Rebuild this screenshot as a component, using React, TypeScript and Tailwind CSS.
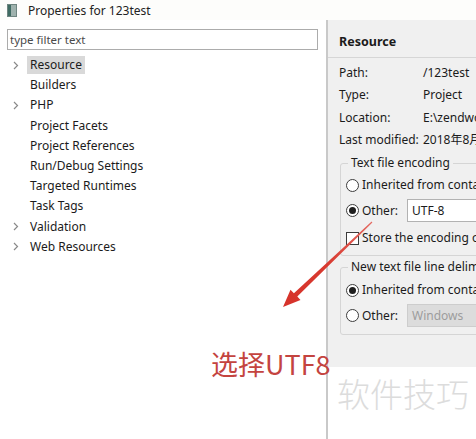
import React from "react";

const treeItems = [
  { name: "Resource", arrow: true, selected: true },
  { name: "Builders", arrow: false },
  { name: "PHP", arrow: true },
  { name: "Project Facets", arrow: false },
  { name: "Project References", arrow: false },
  { name: "Run/Debug Settings", arrow: false },
  { name: "Targeted Runtimes", arrow: false },
  { name: "Task Tags", arrow: false },
  { name: "Validation", arrow: true },
  { name: "Web Resources", arrow: true },
];

const info = [
  ["Path:", "/123test"],
  ["Type:", "Project"],
  ["Location:", "E:\\zendworkspace\\123test"],
  ["Last modified:", "2018年8月10日 下午3:12:45"],
];

function Radio({ checked }: { checked?: boolean }) {
  return (
    <span className="w-[13px] h-[13px] rounded-full border border-[#3c3c3c] bg-white flex items-center justify-center shrink-0">
      {checked && <span className="w-[7px] h-[7px] rounded-full bg-[#1e1e1e]" />}
    </span>
  );
}

function Chevron() {
  return (
    <svg width="6" height="9" viewBox="0 0 6 9" className="shrink-0">
      <path d="M1 1l3.5 3.5L1 8" fill="none" stroke="#8a8a8a" strokeWidth="1.2" />
    </svg>
  );
}

export default function App() {
  return (
    <div
      className="relative w-[476px] h-[439px] bg-white overflow-hidden text-[#1b1b1b] text-[12px]"
      style={{ fontFamily: '"Noto Sans", "Noto Sans CJK SC", sans-serif' }}
    >
      {/* Title bar */}
      <div className="h-[20px] flex items-center pl-[7px] gap-[11px] bg-[#fdfdfb]">
        <div className="w-[10px] h-[13px] bg-[#9fb2ad] border border-[#6f8580] flex">
          <div className="w-[3px] bg-[#3f6b62]" />
        </div>
        <span className="text-[12px] text-[#222] pt-[2px]">Properties for 123test</span>
      </div>

      <div className="flex h-[419px]">
        {/* Left: filter + tree */}
        <div className="w-[326px] shrink-0 pt-[9px]">
          <div className="ml-[7px] w-[311px] h-[21px] border border-[#acacac] flex items-center pl-[2px] text-[#4a4a4a] text-[11.5px]">
            type filter text
          </div>
          <div className="pt-[5px]">
            {treeItems.map((t) => (
              <div key={t.name} className="h-[20.2px] flex items-center">
                <div className="w-[27px] flex justify-end pr-[8px]">{t.arrow && <Chevron />}</div>
                <span
                  className={`px-[3px] leading-[18px] text-[12px] ${t.selected ? "bg-[#d9d9d9]" : ""}`}
                >
                  {t.name}
                </span>
              </div>
            ))}
          </div>
        </div>

        {/* Right: resource page */}
        <div className="flex-1 border-l-2 border-[#c9c9c9] overflow-hidden flex flex-col">
          <div className="bg-[#f0f0f0] h-[347px] w-[300px]">
            <div className="h-[38px] flex items-center pl-[11px] pt-[7px] font-bold text-[12.5px] border-b border-[#d6d6d6]">
              Resource
            </div>
            <div className="pl-[11px] pt-[4px]">
              {info.map(([k, v]) => (
                <div key={k} className="h-[22.3px] flex items-center whitespace-nowrap">
                  <span className="w-[84px] shrink-0">{k}</span>
                  <span>{v}</span>
                </div>
              ))}
            </div>

            <fieldset className="ml-[12px] mt-[4px] w-[270px] border border-[#d5d5d5] rounded-[3px] pl-[5px] pb-[4px]">
              <legend className="px-[3px] ml-[2px] leading-[16px] whitespace-nowrap">Text file encoding</legend>
              <div className="h-[22px] mt-[3px] flex items-center gap-[3px] whitespace-nowrap">
                <Radio />
                <span>Inherited from container (UTF-8)</span>
              </div>
              <div className="h-[29px] flex items-center gap-[3px] whitespace-nowrap">
                <Radio checked />
                <span className="w-[42px]">Other:</span>
                <div className="h-[23px] w-[180px] bg-white border border-[#b2b2b2] flex items-center pl-[4px]">UTF-8</div>
              </div>
              <div className="h-[26px] flex items-center gap-[2px] whitespace-nowrap">
                <span className="w-[13px] h-[13px] border border-[#3c3c3c] bg-white shrink-0" />
                <span className="ml-[1px]">Store the encoding of derived resources separately</span>
              </div>
            </fieldset>

            <fieldset className="ml-[12px] mt-[3px] w-[270px] border border-[#d5d5d5] rounded-[3px] pl-[5px] pb-[4px]">
              <legend className="px-[3px] ml-[2px] leading-[16px] whitespace-nowrap">New text file line delimiter</legend>
              <div className="h-[22px] mt-[4px] flex items-center gap-[3px] whitespace-nowrap">
                <Radio checked />
                <span>Inherited from container (Windows)</span>
              </div>
              <div className="h-[29px] flex items-center gap-[3px] whitespace-nowrap">
                <Radio />
                <span className="w-[42px]">Other:</span>
                <div className="h-[23px] w-[180px] bg-[#dcdcdc] border border-[#cdcdcd] flex items-center pl-[4px] text-[#9c9c9c]">
                  Windows
                </div>
              </div>
            </fieldset>
          </div>
          <div className="flex-1 bg-white" />
        </div>
      </div>

      {/* Red arrow annotation */}
      <svg className="absolute left-0 top-0 pointer-events-none" width="476" height="439">
        <defs>
          <linearGradient id="arrowFade" x1="372" y1="222" x2="284" y2="307" gradientUnits="userSpaceOnUse">
            <stop offset="0" stopColor="#e46a62" />
            <stop offset="0.5" stopColor="#d83a30" />
            <stop offset="1" stopColor="#d6322a" />
          </linearGradient>
        </defs>
        <polygon
          points="372.4,222.4 371.6,221.6 293.9,293.3 290.5,289.8 283,307 300.5,300 297.3,296.6"
          fill="url(#arrowFade)"
        />
      </svg>

      <span
        className="absolute left-[211px] top-[346px] text-[27px] leading-[36px] text-[#c4443f] whitespace-nowrap"
        style={{ fontFamily: '"Noto Sans CJK SC", sans-serif' }}
      >
        选择UTF8
      </span>

      <span
        className="absolute left-[337px] top-[373px] text-[33px] leading-[40px] text-[#dcdcdc] whitespace-nowrap font-light"
        style={{ fontFamily: '"Noto Sans CJK SC", sans-serif' }}
      >
        软件技巧
      </span>
    </div>
  );
}
